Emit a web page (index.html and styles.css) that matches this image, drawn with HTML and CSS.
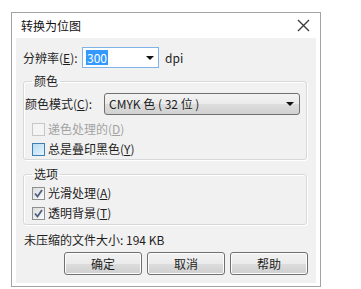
FILE: index.html
```html
<!DOCTYPE html>
<html lang="zh-CN">
<head>
  <meta charset="UTF-8" />
  <title>转换为位图</title>
  <link rel="stylesheet" href="styles.css">
</head>
<body>
  <div class="dialog">
    <div class="titlebar">
      <span class="title">转换为位图</span>
      <svg class="close" width="13" height="13" viewBox="0 0 13 13" aria-label="关闭">
        <path d="M1 1 L12 12 M12 1 L1 12" stroke="#3c3c3c" stroke-width="1.4" fill="none" />
      </svg>
    </div>
    <div class="content">
      <div class="row res-row">
        <span class="lbl res-lbl">分辨率(<u>E</u>):</span>
        <div class="spin">
          <span class="sel">300</span>
          <span class="arrow"></span>
        </div>
        <span class="unit">dpi</span>
      </div>

      <fieldset class="group color-group">
        <legend>颜色</legend>
        <div class="row mode-row">
          <span class="lbl mode-lbl">颜色模式(<u>C</u>):</span>
          <div class="combo">
            <span class="combo-text">CMYK 色 ( 32 位 )</span>
            <span class="arrow"></span>
          </div>
        </div>
        <div class="check disabled first">
          <span class="box"></span>
          <span>递色处理的(<u>D</u>)</span>
        </div>
        <div class="check">
          <span class="box hot"></span>
          <span>总是叠印黑色(<u>Y</u>)</span>
        </div>
      </fieldset>

      <fieldset class="group opt-group">
        <legend>选项</legend>
        <div class="check first">
          <span class="box">
            <svg width="11" height="11" viewBox="0 0 11 11"><path d="M2 5.5 L4.5 8.5 L9 2" stroke="#4d6185" stroke-width="1.8" fill="none" /></svg>
          </span>
          <span>光滑处理(<u>A</u>)</span>
        </div>
        <div class="check">
          <span class="box">
            <svg width="11" height="11" viewBox="0 0 11 11"><path d="M2 5.5 L4.5 8.5 L9 2" stroke="#4d6185" stroke-width="1.8" fill="none" /></svg>
          </span>
          <span>透明背景(<u>T</u>)</span>
        </div>
      </fieldset>

      <div class="size">未压缩的文件大小: 194 KB</div>

      <div class="buttons">
        <button class="btn">确定</button>
        <button class="btn">取消</button>
        <button class="btn">帮助</button>
      </div>
    </div>
  </div>
</body>
</html>
```

FILE: styles.css
```css
body {
  margin: 0;
  background: #fff;
  font-family: "Noto Sans CJK SC", "Noto Sans", sans-serif;
  font-size: 12px;
  line-height: 16px;
  color: #1e1e1e;
}
.dialog {
  margin: 12px 0 0 11px;
  width: 308px;
  border: 1px solid #a3a3a3;
  background: #fff;
}
.titlebar {
  height: 25px;
  display: flex;
  align-items: center;
  justify-content: space-between;
  padding: 0 10px 0 9px;
}
.title {
  color: #111;
}
.close {
  display: block;
}
.content {
  margin: 0 4px 3px;
  padding: 9px 8px 8px 7px;
  background: #f1f1f1;
  display: flex;
  flex-direction: column;
}
.row {
  display: flex;
  align-items: center;
}
.res-row {
  height: 21px;
}
.res-lbl {
  width: 59px;
}
.spin {
  width: 75px;
  height: 19px;
  border: 1px solid #7eb4ea;
  background: #fff;
  display: flex;
  align-items: center;
  justify-content: space-between;
  padding: 0 4px 0 3px;
  box-sizing: content-box;
  margin-right: 6px;
}
.spin {
  width: 68px;
}
.sel {
  background: #3399ff;
  color: #fff;
  line-height: 15px;
  padding: 0 1px;
}
.arrow {
  width: 0;
  height: 0;
  border-left: 4px solid transparent;
  border-right: 4px solid transparent;
  border-top: 4px solid #111;
}
.unit {
  color: #1e1e1e;
}
.group {
  margin: 0 1px 0 0;
  padding: 0 0 0 1px;
  border: 1px solid #d6d9dc;
  border-radius: 3px;
  box-shadow: inset 1px 1px 0 #fff, 1px 1px 0 #fff;
  min-width: 0;
}
.group legend {
  margin-left: 7px;
  padding: 0 2px;
  line-height: 16px;
}
.color-group {
  margin-top: 5px;
  padding-bottom: 0;
}
.opt-group {
  margin-top: 6px;
  padding-bottom: 1px;
}
.mode-row {
  margin-top: 4px;
  height: 22px;
}
.mode-lbl {
  width: 79px;
}
.combo {
  width: 194px;
  height: 20px;
  border: 1px solid #707070;
  border-radius: 3px;
  background: linear-gradient(#f3f3f3, #ebebeb 50%, #dddddd 51%, #d1d1d1);
  display: flex;
  align-items: center;
  justify-content: space-between;
  padding: 0 5px 0 4px;
  box-sizing: border-box;
  width: 196px;
  height: 22px;
}
.check {
  display: flex;
  align-items: center;
  height: 20px;
  padding-left: 7px;
  gap: 3px;
}
.check.first {
  margin-top: 4px;
}
.opt-group .check.first {
  margin-top: 1px;
}
.box {
  width: 11px;
  height: 11px;
  border: 1px solid #8e8f8f;
  background: linear-gradient(135deg, #dcdcdc, #fbfbfb);
  display: flex;
  align-items: center;
  justify-content: center;
}
.box.hot {
  border-color: #3c7fb1;
  background: linear-gradient(135deg, #b7dcf3, #e3f3fc);
}
.disabled {
  color: #a3a3a3;
}
.disabled .box {
  border-color: #c7c7c7;
  background: #f4f4f4;
}
.size {
  margin: 7px 0 0 1px;
}
.buttons {
  margin-top: 4px;
  display: flex;
  justify-content: flex-end;
  gap: 5px;
}
.btn {
  width: 78px;
  height: 23px;
  border: 1px solid #707070;
  border-radius: 3px;
  background: linear-gradient(#f2f2f2, #ebebeb 50%, #dddddd 51%, #cfcfcf);
  box-shadow: inset 0 0 0 1px #fcfcfc;
  font: inherit;
  color: #1e1e1e;
  padding: 0;
}
```
